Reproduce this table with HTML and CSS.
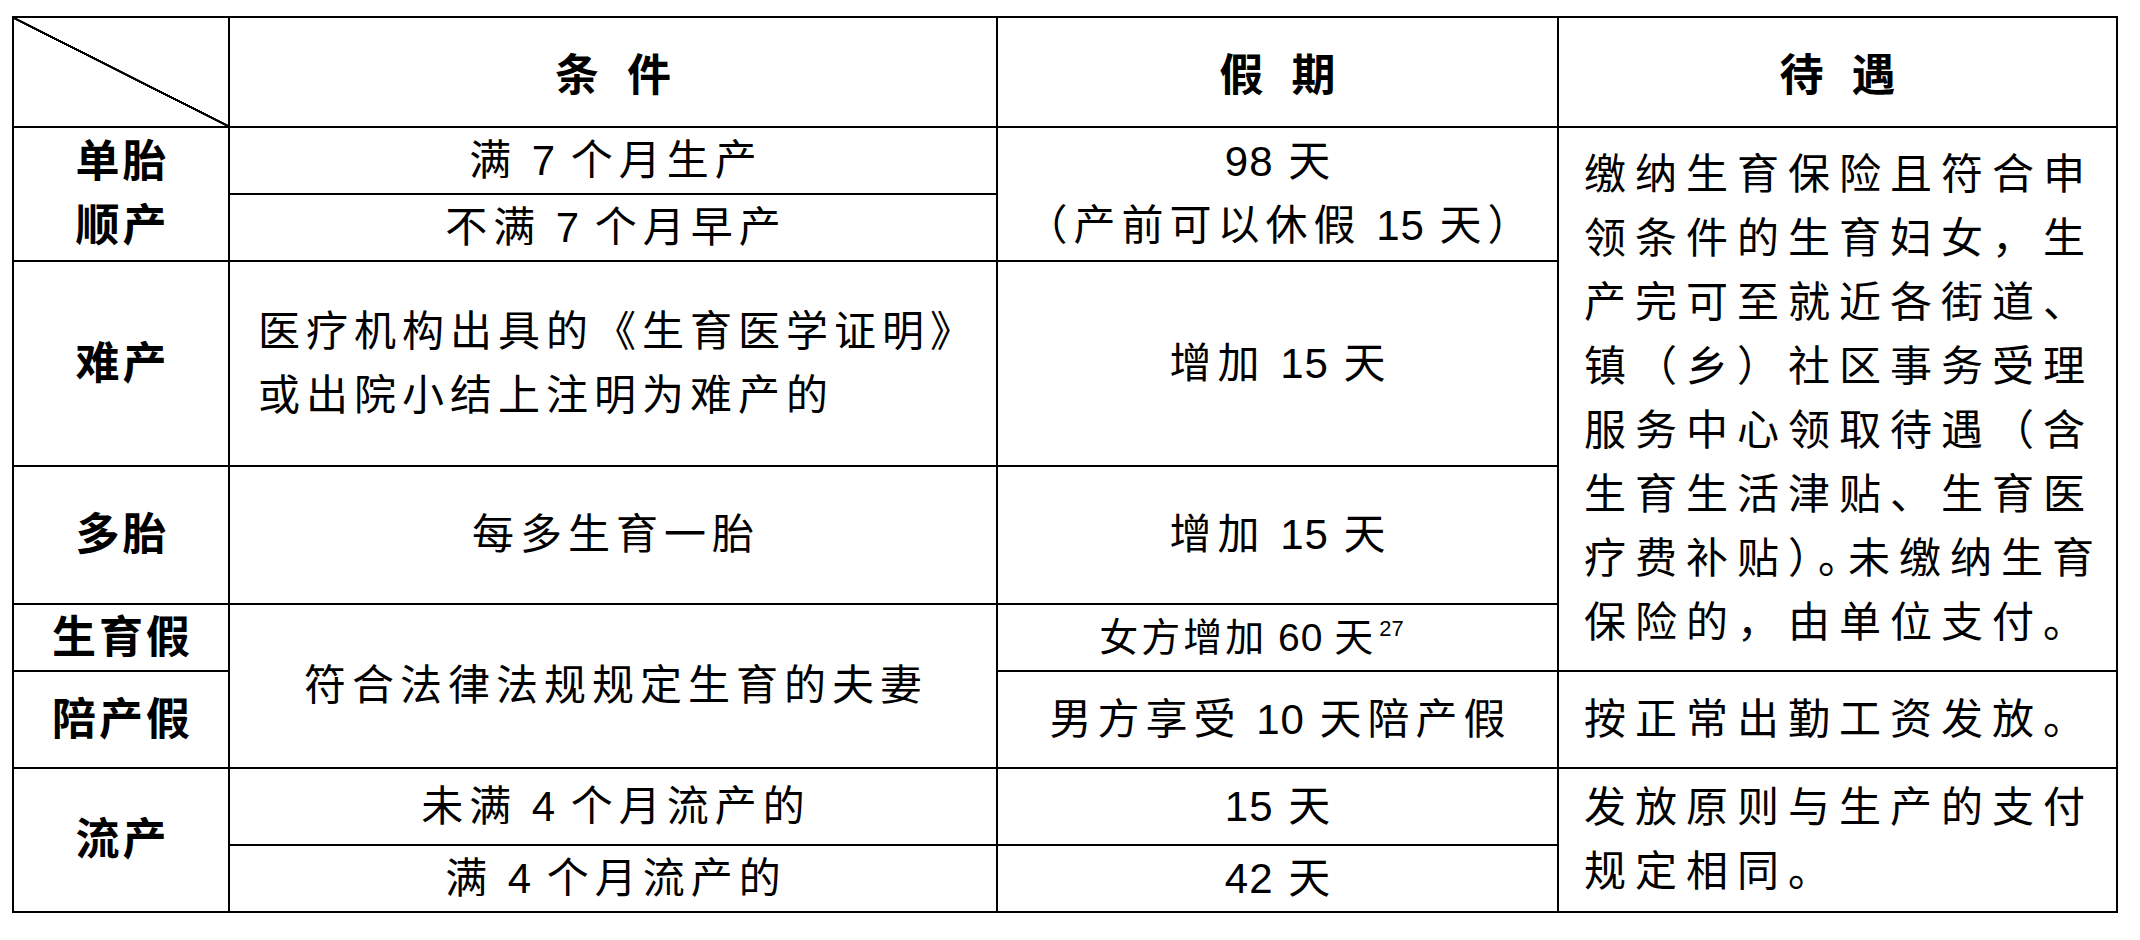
FILE: index.html
```html
<!DOCTYPE html>
<html lang="zh-CN">
<head>
<meta charset="utf-8">
<title>生育假期与待遇</title>
<link rel="stylesheet" href="styles.css">
</head>
<body>
<div class="page">
<table class="leave">
  <colgroup>
    <col class="c1">
    <col class="c2">
    <col class="c3">
    <col class="c4">
  </colgroup>
  <tr class="r-head">
    <th class="diag"></th>
    <th class="head">条 件</th>
    <th class="head">假 期</th>
    <th class="head">待 遇</th>
  </tr>
  <tr class="r-67">
    <td class="label" rowspan="2">单胎<br>顺产</td>
    <td class="cen">满 <span class="num">7</span> 个月生产</td>
    <td class="cen" rowspan="2"><span class="num">98</span> 天<br>（产前可以休假 <span class="num">15</span> 天）</td>
    <td class="treat" rowspan="5">缴纳生育保险且符合申<br>领条件的生育妇女，生<br>产完可至就近各街道、<br>镇（乡）社区事务受理<br>服务中心领取待遇（含<br>生育生活津贴、生育医<br>疗费补贴<span class="halt">）。</span>未缴纳生育<br>保险的，由单位支付。</td>
  </tr>
  <tr class="r-67">
    <td class="cen">不满 <span class="num">7</span> 个月早产</td>
  </tr>
  <tr class="r-205">
    <td class="label">难产</td>
    <td class="left">医疗机构出具的《生育医学证明》<br>或出院小结上注明为难产的</td>
    <td class="cen">增加 <span class="num">15</span> 天</td>
  </tr>
  <tr class="r-138">
    <td class="label">多胎</td>
    <td class="cen">每多生育一胎</td>
    <td class="cen">增加 <span class="num">15</span> 天</td>
  </tr>
  <tr class="r-67">
    <td class="label">生育假</td>
    <td class="cen" rowspan="2">符合法律法规规定生育的夫妻</td>
    <td class="cen small">女方增加 <span class="num">60</span> 天<sup class="note">27</sup></td>
  </tr>
  <tr class="r-97">
    <td class="label">陪产假</td>
    <td class="cen">男方享受 <span class="num">10</span> 天陪产假</td>
    <td class="treat">按正常出勤工资发放。</td>
  </tr>
  <tr class="r-77">
    <td class="label" rowspan="2">流产</td>
    <td class="cen">未满 <span class="num">4</span> 个月流产的</td>
    <td class="cen"><span class="num">15</span> 天</td>
    <td class="treat" rowspan="2">发放原则与生产的支付<br>规定相同。</td>
  </tr>
  <tr class="r-67">
    <td class="cen">满 <span class="num">4</span> 个月流产的</td>
    <td class="cen"><span class="num">42</span> 天</td>
  </tr>
</table>
</div>
</body>
</html>
```

FILE: styles.css
```css
html, body {
  margin: 0;
  padding: 0;
  background: #ffffff;
}

.page {
  padding: 16px 0 0 12px;
}

.leave {
  border-collapse: collapse;
  table-layout: fixed;
  width: 2104px;
  color: #000;
  font-family: "Liberation Sans Narrow", "Liberation Sans", "Noto Sans CJK SC", sans-serif;
  font-size: 42px;
}

.c1 { width: 216px; }
.c2 { width: 768px; }
.c3 { width: 561px; }
.c4 { width: 559px; }

.leave th,
.leave td {
  border: 2px solid #000;
  padding: 0;
  vertical-align: middle;
  white-space: nowrap;
  line-height: 64px;
}

.r-head { height: 110px; }
.r-67 { height: 67px; }
.r-77 { height: 77px; }
.r-97 { height: 97px; }
.r-138 { height: 138px; }
.r-205 { height: 205px; }

.leave .diag {
  background: linear-gradient(to top right,
    transparent calc(50% - 1.3px),
    #000 calc(50% - 1px),
    #000 calc(50% + 1px),
    transparent calc(50% + 1.3px));
}

.leave .head {
  font-weight: 700;
  font-size: 44px;
  letter-spacing: 8px;
  padding-left: 8px;
  text-align: center;
  line-height: normal;
}

.leave .label {
  font-weight: 700;
  font-size: 44px;
  letter-spacing: 3px;
  padding-left: 3px;
  text-align: center;
}

.leave .cen {
  text-align: center;
  letter-spacing: 6px;
  word-spacing: -3px;
  padding-left: 6px;
}

.leave .left {
  text-align: left;
  letter-spacing: 6px;
  padding-left: 28px;
}

.leave .small {
  font-size: 39px;
  letter-spacing: 3px;
  padding-left: 0;
  padding-right: 52px;
}

.num {
  letter-spacing: 1px;
}

.note {
  font-size: 22px;
  line-height: 0;
  letter-spacing: 0;
  vertical-align: 15px;
  margin-left: 3px;
}

.leave .treat {
  text-align: left;
  letter-spacing: 9px;
  padding-left: 25px;
}

.halt {
  font-feature-settings: "halt" 1;
}
```
